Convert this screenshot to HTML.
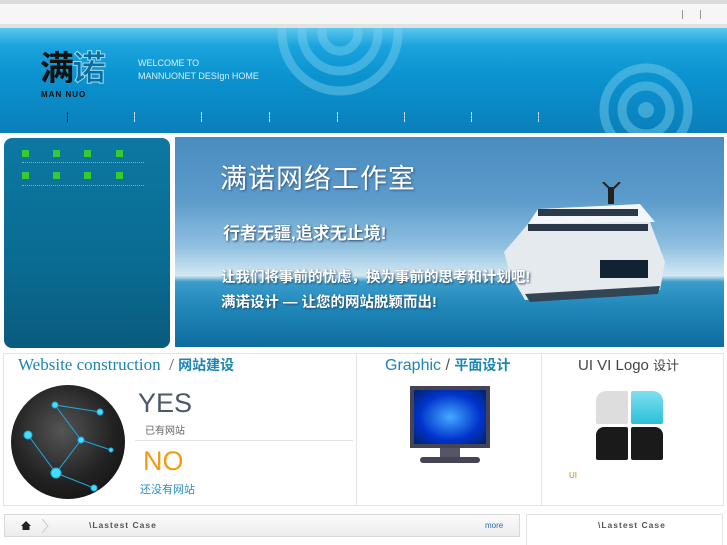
<!DOCTYPE html>
<html><head><meta charset="utf-8"><style>
*{margin:0;padding:0;box-sizing:border-box}
body{width:727px;height:545px;overflow:hidden;background:#fff;font-family:"Liberation Sans","Noto Sans CJK SC",sans-serif;position:relative}
.a{position:absolute}
.cn{font-family:"Liberation Sans","Noto Sans CJK SC",sans-serif}
</style></head><body>
<div class="a" style="left:0;top:0;width:727px;height:4px;background:#dcdcdc"></div>
<div class="a" style="left:0;top:4px;width:727px;height:21px;background:#f6f6f6"></div>
<div class="a" style="left:0;top:24px;width:727px;height:4px;background:#e2e2e2"></div>
<div class="a" style="left:682px;top:10px;width:1px;height:9px;background:#999"></div>
<div class="a" style="left:700px;top:10px;width:1px;height:9px;background:#999"></div>
<!-- header -->
<div class="a" style="left:0;top:28px;width:727px;height:105px;background:linear-gradient(#5ac6ee 0px,#1aa3dc 18px,#0a92cf 50px,#0a7fba 105px);overflow:hidden">
 <svg class="a" style="left:0;top:0" width="727" height="105">
  <g fill="none" stroke="#7fd0f0" stroke-opacity=".45" stroke-width="9">
   <circle cx="340" cy="5" r="58"/><circle cx="340" cy="5" r="38"/><circle cx="340" cy="5" r="18"/>
   <circle cx="646" cy="82" r="42"/><circle cx="646" cy="82" r="24"/>
  </g>
  <circle cx="646" cy="82" r="8" fill="#7fd0f0" fill-opacity=".45"/>
 </svg>
 <div class="a cn" style="left:40px;top:22px;font-size:34px;font-weight:bold;letter-spacing:-2px;color:#111;line-height:38px">满<span style="color:#0a6d9e;-webkit-text-stroke:1px #9fdcf5">诺</span></div>
 <div class="a" style="left:41px;top:62px;font-size:8px;font-weight:bold;color:#111;letter-spacing:1px">MAN NUO</div>
 <div class="a" style="left:138px;top:29px;font-size:9px;color:#d8f0fb;line-height:13px">WELCOME TO<br>MANNUONET DESIgn HOME</div>
</div>
<div class="a" style="left:0;top:110px;width:727px;height:14px">
 <div class="a" style="left:67px;top:2px;border-left:1px dashed #123;height:10px"></div>
 <div class="a" style="left:134px;top:2px;border-left:1px dashed #cde;height:10px"></div>
 <div class="a" style="left:201px;top:2px;border-left:1px dashed #cde;height:10px"></div>
 <div class="a" style="left:269px;top:2px;border-left:1px dashed #cde;height:10px"></div>
 <div class="a" style="left:337px;top:2px;border-left:1px dashed #cde;height:10px"></div>
 <div class="a" style="left:404px;top:2px;border-left:1px dashed #cde;height:10px"></div>
 <div class="a" style="left:471px;top:2px;border-left:1px dashed #cde;height:10px"></div>
 <div class="a" style="left:538px;top:2px;border-left:1px dashed #cde;height:10px"></div>
</div>
<!-- left panel -->
<div class="a" style="left:4px;top:138px;width:166px;height:210px;border-radius:8px;background:linear-gradient(#0c78a2,#0a6b92 60%,#095b7d)"></div>
<div class="a" style="left:22px;top:150px">
 <div class="a" style="left:0;top:0;width:7px;height:7px;background:#3c3"></div>
 <div class="a" style="left:31px;top:0;width:7px;height:7px;background:#3c3"></div>
 <div class="a" style="left:62px;top:0;width:7px;height:7px;background:#3c3"></div>
 <div class="a" style="left:94px;top:0;width:7px;height:7px;background:#3c3"></div>
 <div class="a" style="left:0;top:22px;width:7px;height:7px;background:#3c3"></div>
 <div class="a" style="left:31px;top:22px;width:7px;height:7px;background:#3c3"></div>
 <div class="a" style="left:62px;top:22px;width:7px;height:7px;background:#3c3"></div>
 <div class="a" style="left:94px;top:22px;width:7px;height:7px;background:#3c3"></div>
 <div class="a" style="left:0;top:12px;width:122px;border-top:1px dotted #7fb0c8"></div>
 <div class="a" style="left:0;top:35px;width:122px;border-top:1px dotted #7fb0c8"></div>
</div>
<!-- banner -->
<div class="a" style="left:175px;top:137px;width:549px;height:210px;overflow:hidden;background:linear-gradient(#4a8cc0 0%,#5c9bcb 30%,#8fc0e0 52%,#d4e8f2 66%,#3a9ccb 69%,#1f86b8 82%,#0f6c9f 100%)">
 <svg class="a" style="left:325px;top:45px" width="170" height="125">
  <path d="M4 70 L28 42 L150 40 L165 80 L160 108 L25 118 L10 92 Z" fill="#e4eaee"/>
  <path d="M28 42 L38 27 L140 22 L155 40 Z" fill="#f4f7f9"/>
  <rect x="38" y="27" width="100" height="7" fill="#2a3a4a"/>
  <rect x="28" y="42" width="120" height="7" fill="#2a3a4a"/>
  <rect x="100" y="78" width="48" height="18" fill="#123"/>
  <path d="M25 112 L160 104 L158 112 L30 120Z" fill="#345"/>
  <rect x="108" y="5" width="6" height="17" fill="#222"/>
  <path d="M103 0 L110 7 M120 0 L113 7" stroke="#222" stroke-width="2"/>
 </svg>
 <div class="a cn" style="left:45px;top:20px;font-size:27px;color:#fff;letter-spacing:1px;text-shadow:1px 1px 2px #357">满诺网络工作室</div>
 <div class="a cn" style="left:48px;top:82px;font-size:17px;color:#fff;font-weight:bold;text-shadow:1px 1px 2px #246">行者无疆,追求无止境!</div>
 <div class="a cn" style="left:46px;top:129px;font-size:14.5px;color:#fff;font-weight:bold;text-shadow:1px 1px 2px #246">让我们将事前的忧虑，换为事前的思考和计划吧!</div>
 <div class="a cn" style="left:46px;top:154px;font-size:14.5px;color:#fff;font-weight:bold;text-shadow:1px 1px 2px #246">满诺设计 — 让您的网站脱颖而出!</div>
</div>
<!-- boxes -->
<div class="a" style="left:3px;top:353px;width:721px;height:153px;border:1px solid #e4e4e4"></div>
<div class="a" style="left:356px;top:353px;width:1px;height:153px;background:#e4e4e4"></div>
<div class="a" style="left:541px;top:353px;width:1px;height:153px;background:#e4e4e4"></div>
<div class="a" style="left:18px;top:355px;font-family:'Liberation Serif',serif;font-size:17px;color:#1b86b3">Website construction <span style="color:#555">&nbsp;/ </span><span class="cn" style="font-size:14px;font-weight:bold;color:#1b86b3;font-family:'Liberation Sans','Noto Sans CJK SC',sans-serif">网站建设</span></div>
<div class="a" style="left:11px;top:385px;width:114px;height:114px;border-radius:50%;background:radial-gradient(circle at 45% 40%,#555,#222 55%,#0b0b0b)"></div>
<svg class="a" style="left:11px;top:385px" width="114" height="114"><g stroke="#2ad" stroke-width="1" fill="#4df"><path d="M44 20 L89 27 M44 20 L70 55 L100 65 M70 55 L45 88 L17 50 M45 88 L83 103" fill="none"/><circle cx="44" cy="20" r="3"/><circle cx="89" cy="27" r="3"/><circle cx="17" cy="50" r="4"/><circle cx="70" cy="55" r="3"/><circle cx="100" cy="65" r="2"/><circle cx="45" cy="88" r="5"/><circle cx="83" cy="103" r="3"/></g></svg>
<div class="a" style="left:138px;top:388px;font-size:27px;color:#4a5868">YES</div>
<div class="a cn" style="left:145px;top:422px;font-size:10px;color:#666">已有网站</div>
<div class="a" style="left:135px;top:440px;width:218px;height:1px;background:#e4e4e4"></div>
<div class="a" style="left:143px;top:446px;font-size:27px;color:#f39a16">NO</div>
<div class="a cn" style="left:140px;top:481px;font-size:11px;color:#2a8fc0">还没有网站</div>
<div class="a" style="left:385px;top:355px;font-size:16px;color:#1b86b3">Graphic<span style="color:#555"> / </span><span class="cn" style="font-size:14px;font-weight:bold">平面设计</span></div>
<div class="a" style="left:410px;top:386px;width:80px;height:62px;background:#445;padding:4px"><div style="width:100%;height:100%;background:radial-gradient(#4af,#03c 60%,#026)"></div></div>
<div class="a" style="left:440px;top:448px;width:20px;height:10px;background:#556"></div>
<div class="a" style="left:420px;top:457px;width:60px;height:6px;border-radius:3px;background:#445"></div>
<div class="a" style="left:578px;top:355px;font-size:15px;color:#444">UI VI Logo <span class="cn" style="font-size:13px">设计</span></div>
<div class="a" style="left:596px;top:391px;width:32px;height:33px;background:#ddd;border-radius:10px 2px 2px 2px"></div>
<div class="a" style="left:631px;top:391px;width:32px;height:33px;background:linear-gradient(#7de0ee,#2bc0d8);border-radius:2px 10px 2px 2px"></div>
<div class="a" style="left:596px;top:427px;width:32px;height:33px;background:#1a1a1a;border-radius:8px 2px 2px 2px"></div>
<div class="a" style="left:631px;top:427px;width:32px;height:33px;background:#1a1a1a;border-radius:2px 8px 2px 2px"></div>
<div class="a" style="left:569px;top:471px;font-size:8px;color:#c80">UI</div>
<!-- bottom -->
<div class="a" style="left:4px;top:514px;width:516px;height:23px;border:1px solid #d8d8d8;background:linear-gradient(#fbfbfb,#ececec)"></div>
<svg class="a" style="left:20px;top:519px" width="30" height="14"><path d="M1 7 L6 2 L11 7 L9.5 7 L9.5 11 L2.5 11 L2.5 7Z" fill="#222"/><path d="M22 0 L28 7 L22 14" fill="none" stroke="#ccc"/></svg>
<div class="a" style="left:89px;top:520px;font-size:8.5px;font-weight:bold;color:#555;letter-spacing:1px">\Lastest Case</div>
<div class="a" style="left:485px;top:521px;font-size:8px;color:#2a6ab0">more</div>
<div class="a" style="left:526px;top:514px;width:197px;height:31px;border:1px solid #e2e2e2;border-bottom:none"></div>
<div class="a" style="left:598px;top:520px;font-size:8.5px;font-weight:bold;color:#555;letter-spacing:1px">\Lastest Case</div>
</body></html>
